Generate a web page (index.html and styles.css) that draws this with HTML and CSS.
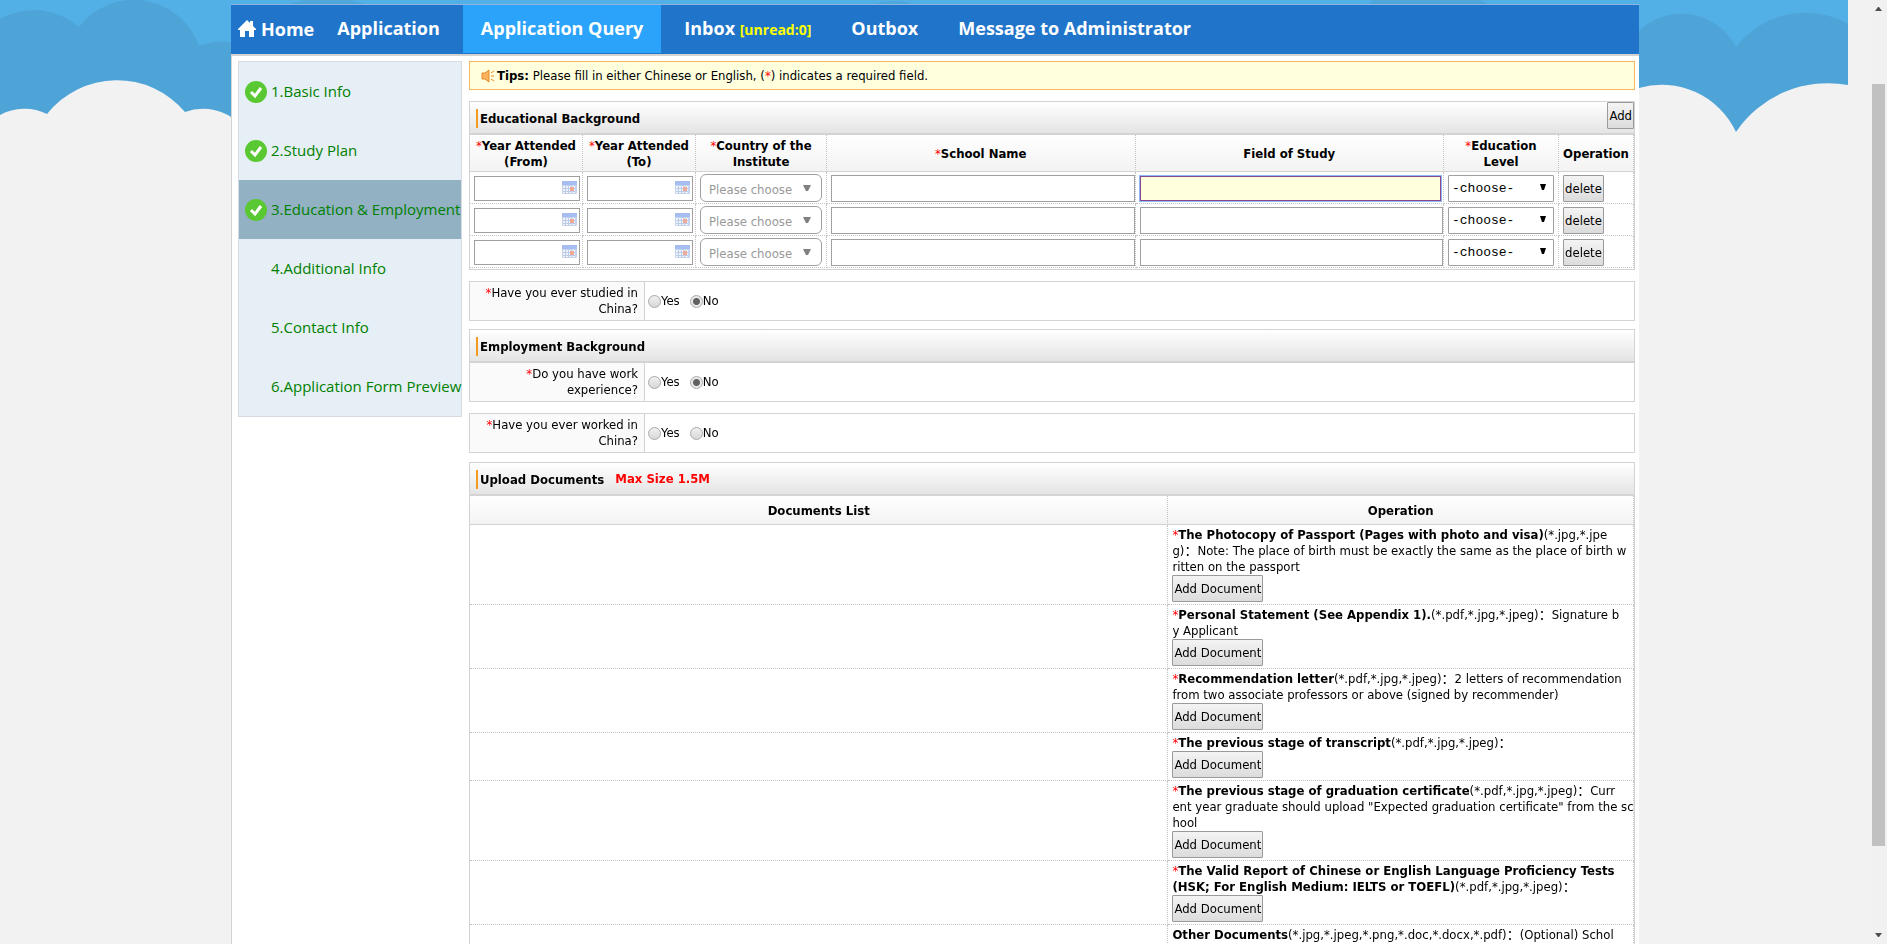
FILE: index.html
```
<!DOCTYPE html>
<html lang="en">
<head>
  <meta charset="UTF-8">
  <title>Education &amp; Employment</title>
  <link rel="stylesheet" href="styles.css">
</head>
<body>

  <div class="page">
    <svg class="sky" width="1848" height="134" viewBox="0 0 1848 134" aria-hidden="true">
      <rect width="1848" height="134" fill="#53b0e6"/>
      <path fill="#4fa4d7" d="M0 19 A68 68 0 0 1 79 27 A69 69 0 0 1 199 46 A60 60 0 0 1 260 55 V134 H0 Z"/>
      <path fill="#4fa6d9" d="M286 5 Q327 -9 368 5 Z M873 5 Q894 -3 915 5 Z M1368 5 L1373 0 H1480 L1490 5 Z"/>
      <path fill="#4fa4d7" d="M1600 60 L1639 31 A61 61 0 0 1 1736 47 A87 87 0 0 1 1848 24 V134 H1600 Z"/>
      <path fill="#f2f2f2" d="M0 115 A51 51 0 0 1 47 114 A89 89 0 0 1 185 112 A53 53 0 0 1 240 124 V134 H0 Z"/>
      <path fill="#f2f2f2" d="M1600 108 L1639 88 A82 82 0 0 1 1736 132 A111 111 0 0 1 1848 85 V134 H1600 Z"/>
    </svg>

    <div class="wrapper">
      <nav class="nav">
        <a class="home" href="#">
          <svg width="18" height="18" viewBox="0 0 18 18" aria-hidden="true"><path fill="#fff" d="M9 0 L12 3 V1 H15 V6 L18 9 V10 H16 V17 H11 V11 H7 V17 H2 V10 H0 V9 Z"/></svg>Home</a>
        <a href="#">Application</a>
        <a class="active" href="#">Application Query</a>
        <a href="#">Inbox <span class="unread">[unread:0]</span></a>
        <a href="#">Outbox</a>
        <a href="#">Message to Administrator</a>
      </nav>

      <div class="content">
        <ul class="steps">
          <li><svg class="tick" viewBox="0 0 22 22"><circle cx="11" cy="11" r="11" fill="#5ac832"/><path d="M6 11 L10 15 L16 7" fill="none" stroke="#fff" stroke-width="3"/></svg><a href="#">1.Basic Info</a></li>
          <li><svg class="tick" viewBox="0 0 22 22"><circle cx="11" cy="11" r="11" fill="#5ac832"/><path d="M6 11 L10 15 L16 7" fill="none" stroke="#fff" stroke-width="3"/></svg><a href="#">2.Study Plan</a></li>
          <li class="current"><svg class="tick" viewBox="0 0 22 22"><circle cx="11" cy="11" r="11" fill="#5ac832"/><path d="M6 11 L10 15 L16 7" fill="none" stroke="#fff" stroke-width="3"/></svg><a href="#">3.Education &amp; Employment</a></li>
          <li><a href="#">4.Additional Info</a></li>
          <li><a href="#">5.Contact Info</a></li>
          <li><a href="#">6.Application Form Preview</a></li>
        </ul>

        <main class="main">
          <div class="tips">
            <svg width="14" height="14" viewBox="0 0 14 14" aria-hidden="true">
              <path d="M1 4 H4 L8 1 V13 L4 10 H1 Z" fill="#f9b45c" stroke="#e58a2c"/>
              <path d="M10 4 L13 2 M10 7 H13 M10 10 L13 12" stroke="#e58a2c" stroke-width="1"/>
            </svg>
            <p><b>Tips:</b> Please fill in either Chinese or English, (<i>*</i>) indicates a required field.</p>
          </div>

          <section class="panel education">
            <header><h2>Educational Background</h2><button>Add</button></header>
            <table class="grid">
              <colgroup>
                <col class="c-year"><col class="c-year"><col class="c-country"><col><col><col class="c-level"><col class="c-op">
              </colgroup>
              <thead>
                <tr>
                  <th><i>*</i>Year Attended<br>(From)</th>
                  <th><i>*</i>Year Attended<br>(To)</th>
                  <th><i>*</i>Country of the<br>Institute</th>
                  <th><i>*</i>School Name</th>
                  <th>Field of Study</th>
                  <th><i>*</i>Education<br>Level</th>
                  <th>Operation</th>
                </tr>
              </thead>
              <tbody>
                <tr>
                  <td><input class="date" type="text" aria-label="Year attended from"></td>
                  <td><input class="date" type="text" aria-label="Year attended to"></td>
                  <td><select class="country" aria-label="Country of the institute"><option>Please choose</option></select></td>
                  <td class="wide"><input type="text" aria-label="School name"></td>
                  <td class="wide"><input class="focused" type="text" aria-label="Field of study" autofocus></td>
                  <td><select class="level" aria-label="Education level"><option>-choose-</option></select></td>
                  <td><button>delete</button></td>
                </tr>
                <tr>
                  <td><input class="date" type="text" aria-label="Year attended from"></td>
                  <td><input class="date" type="text" aria-label="Year attended to"></td>
                  <td><select class="country" aria-label="Country of the institute"><option>Please choose</option></select></td>
                  <td class="wide"><input type="text" aria-label="School name"></td>
                  <td class="wide"><input type="text" aria-label="Field of study"></td>
                  <td><select class="level" aria-label="Education level"><option>-choose-</option></select></td>
                  <td><button>delete</button></td>
                </tr>
                <tr>
                  <td><input class="date" type="text" aria-label="Year attended from"></td>
                  <td><input class="date" type="text" aria-label="Year attended to"></td>
                  <td><select class="country" aria-label="Country of the institute"><option>Please choose</option></select></td>
                  <td class="wide"><input type="text" aria-label="School name"></td>
                  <td class="wide"><input type="text" aria-label="Field of study"></td>
                  <td><select class="level" aria-label="Education level"><option>-choose-</option></select></td>
                  <td><button>delete</button></td>
                </tr>
              </tbody>
            </table>
          </section>

          <div class="question" role="radiogroup" aria-labelledby="q1">
            <div class="ask" id="q1"><i>*</i>Have you ever studied in<br>China?</div>
            <div class="answer">
              <label><input type="radio" name="studied">Yes</label>
              <label><input type="radio" name="studied" checked>No</label>
            </div>
          </div>

          <section class="panel employment">
            <header><h2>Employment Background</h2></header>
          </section>
          <div class="question joined" role="radiogroup" aria-labelledby="q2">
            <div class="ask" id="q2"><i>*</i>Do you have work<br>experience?</div>
            <div class="answer">
              <label><input type="radio" name="work">Yes</label>
              <label><input type="radio" name="work" checked>No</label>
            </div>
          </div>
          <div class="question" role="radiogroup" aria-labelledby="q3">
            <div class="ask" id="q3"><i>*</i>Have you ever worked in<br>China?</div>
            <div class="answer">
              <label><input type="radio" name="worked">Yes</label>
              <label><input type="radio" name="worked">No</label>
            </div>
          </div>

          <section class="panel upload">
            <header><h2>Upload Documents</h2><strong class="max">Max Size 1.5M</strong></header>
            <table class="grid docs">
              <thead>
                <tr><th class="c-list">Documents List</th><th>Operation</th></tr>
              </thead>
              <tbody>
                <tr><td></td><td><p><i>*</i><b>The Photocopy of Passport (Pages with photo and visa)</b>(*.jpg,*.jpe<br>g)：Note: The place of birth must be exactly the same as the place of birth w<br>ritten on the passport</p><button>Add Document</button></td></tr>
                <tr><td></td><td><p><i>*</i><b>Personal Statement (See Appendix 1).</b>(*.pdf,*.jpg,*.jpeg)：Signature b<br>y Applicant</p><button>Add Document</button></td></tr>
                <tr><td></td><td><p><i>*</i><b>Recommendation letter</b>(*.pdf,*.jpg,*.jpeg)：2 letters of recommendation<br>from two associate professors or above (signed by recommender)</p><button>Add Document</button></td></tr>
                <tr><td></td><td><p><i>*</i><b>The previous stage of transcript</b>(*.pdf,*.jpg,*.jpeg)：</p><button>Add Document</button></td></tr>
                <tr><td></td><td><p><i>*</i><b>The previous stage of graduation certificate</b>(*.pdf,*.jpg,*.jpeg)：Curr<br>ent year graduate should upload "Expected graduation certificate" from the sc<br>hool</p><button>Add Document</button></td></tr>
                <tr><td></td><td><p><i>*</i><b>The Valid Report of Chinese or English Language Proficiency Tests<br>(HSK; For English Medium: IELTS or TOEFL)</b>(*.pdf,*.jpg,*.jpeg)：</p><button>Add Document</button></td></tr>
                <tr><td></td><td><p><b>Other Documents</b>(*.jpg,*.jpeg,*.png,*.doc,*.docx,*.pdf)：(Optional) Schol</p></td></tr>
              </tbody>
            </table>
          </section>
        </main>
      </div>
    </div>
  </div>

  <div class="scrollbar" aria-hidden="true">
    <svg width="7" height="4" viewBox="0 0 7 4"><path fill="#505050" d="M0 4 L3 0 H4 L7 4 Z"/></svg>
    <div class="track"><div class="thumb"></div></div>
    <svg width="7" height="4" viewBox="0 0 7 4"><path fill="#505050" d="M0 0 H7 L4 4 H3 Z"/></svg>
  </div>

</body>
</html>
```
FILE: styles.css
```
* {
  box-sizing: border-box;
}
body {
  margin: 0;
  height: 100vh;
  display: flex;
  overflow: hidden;
  background: #f2f2f2;
  color: #000;
  font-family: "DejaVu Sans Condensed", "Noto Sans CJK SC", sans-serif;
  font-size: 13px;
  line-height: 16px;
}
i {
  color: #f00;
  font-style: normal;
  font-weight: normal;
}
p, h2, ul {
  margin: 0;
  padding: 0;
}
.page {
  flex: 1;
  position: relative;
  overflow: hidden;
  padding-top: 4px;
}
.sky {
  position: absolute;
  top: 0;
  left: 0;
}
.wrapper {
  position: relative;
  max-width: 1408px;
  min-height: 100%;
  margin: 0 auto;
  background: #fff;
}

/* top menu */
.nav {
  display: flex;
  gap: 6px;
  height: 52px;
  background: #2075cb;
  border-top: 1px solid #8db4e0;
  border-bottom: 2px solid #d3d3d3;
  font-family: "Open Sans", sans-serif;
  font-size: 18px;
  font-weight: bold;
}
.nav a {
  height: 48px;
  padding: 0 17px;
  line-height: 46px;
  color: #fff;
  text-decoration: none;
  white-space: nowrap;
}
.nav .home {
  display: flex;
  align-items: center;
  gap: 5px;
  padding: 0 0 0 7px;
}
.nav .active {
  padding: 0 18px;
  background: #2ba3fa;
}
.unread {
  color: #ff0;
  font-size: 14px;
}

.content {
  display: flex;
  align-items: flex-start;
  gap: 7px;
  min-height: 888px;
  padding: 5px 4px 0 6px;
  border-left: 1px solid #d3d3d3;
}

/* step list */
.steps {
  width: 224px;
  flex: none;
  list-style: none;
  background: #e6eff5;
  border: 1px solid #d5dbe0;
  font-family: "Open Sans", sans-serif;
  font-size: 15px;
}
.steps li {
  display: flex;
  align-items: center;
  justify-content: flex-end;
  height: 59px;
  padding-left: 6px;
}
.steps a {
  width: 190px;
  padding-bottom: 2px;
  color: #008000;
  text-decoration: none;
  white-space: nowrap;
}
.steps .current {
  background: #92b1c3;
}
.tick {
  width: 22px;
  height: 22px;
  margin-right: 4px;
}

.main {
  flex: 1;
  min-width: 0;
}
.tips {
  display: flex;
  align-items: center;
  gap: 2px;
  height: 29px;
  padding-left: 11px;
  background: #ffffde;
  border: 1px solid #fab75f;
}

/* panels */
.panel {
  margin-top: 11px;
  border: 1px solid #d3d3d3;
}
.panel header {
  display: flex;
  align-items: flex-start;
  height: 33px;
  background: linear-gradient(#fff, #e4e4e4);
  border-bottom: 2px solid #d3d3d3;
}
.panel h2 {
  flex: none;
  margin: 7px 0 0 6px;
  padding-left: 2px;
  border-left: 2px solid #f39a1f;
  font-size: 13px;
  line-height: 19px;
}
.panel header button {
  margin-left: auto;
}
.education {
  padding-bottom: 1px;
}
.employment {
  margin-top: 8px;
  border-bottom: 0;
}
.upload {
  margin-top: 9px;
}
.max {
  margin: 8px 0 0 11px;
  color: #f00;
}

button {
  height: 27px;
  padding: 0 1px;
  background: linear-gradient(#f4f4f4, #dcdcdc);
  border: 1px solid #9a9a9a;
  border-radius: 1px;
  font-family: inherit;
  font-size: 13px;
  color: #000;
}

.grid {
  width: 100%;
  table-layout: fixed;
  border-collapse: separate;
  border-spacing: 0;
}
.grid th {
  height: 37px;
  padding: 1px 0 0;
  background: linear-gradient(#fff, #f3f3f3);
  border-right: 1px dotted #c4c4c4;
  border-bottom: 1px solid #d3d3d3;
  line-height: 16px;
  white-space: nowrap;
}
.grid td {
  height: 32px;
  padding: 2px 4px 1px;
  border-right: 1px dotted #c4c4c4;
  border-bottom: 1px dotted #c4c4c4;
}
.grid .wide {
  padding-right: 0;
}
.c-year {
  width: 113px;
}
.c-country {
  width: 131px;
}
.c-level {
  width: 115px;
}
.c-op {
  width: 75px;
}
.grid input, .grid select {
  display: block;
  width: 100%;
  height: 27px;
  margin: 0;
  padding: 0 2px;
  background-color: #fff;
  border: 1px solid #a0a0a0;
}
.grid .date {
  width: 106px;
  height: 25px;
  background: #fff url("data:image/svg+xml,%3Csvg xmlns='http://www.w3.org/2000/svg' width='16' height='16'%3E%3Crect x='1' y='2' width='15' height='13' rx='1' fill='%23c6d3ec'/%3E%3Cpath d='M2 7h12v7H2z' fill='%23eef3fb'/%3E%3Cpath d='M1 2h15v4H1z' fill='%23a5bdf0'/%3E%3Cpath d='M2 9.5h12M2 12.5h12M4.500 7v7M7.500 7v7M10.500 7v7' stroke='%23bccbe8'/%3E%3Cpath d='M9 8h4v4H9z' fill='%23f0a994'/%3E%3C/svg%3E") no-repeat right 2px top 2px;
}
.grid .focused {
  width: calc(100% - 2px);
  height: 25px;
  background: #ffffde;
  border-color: #8a4a8a;
  outline: 1px solid #8ab8f8;
}
.grid select {
  appearance: none;
  background-repeat: no-repeat;
  background-position: right 7px top 8px;
  background-image: url("data:image/svg+xml,%3Csvg xmlns='http://www.w3.org/2000/svg' width='6' height='7'%3E%3Cpath d='M0 0h6L4 6H2z'/%3E%3C/svg%3E");
  color: #000;
}
.grid .country {
  height: 28px;
  padding: 2px 8px 0;
  border-radius: 6px;
  color: #999;
  font-family: "DejaVu Sans Condensed", sans-serif;
  font-size: 13px;
  background-position: right 10px top 10px;
  background-image: url("data:image/svg+xml,%3Csvg xmlns='http://www.w3.org/2000/svg' width='8' height='7'%3E%3Cpath d='M0 0h8L5 6H3z' fill='%23808080'/%3E%3C/svg%3E");
}
.grid .level {
  width: 106px;
  padding-left: 3px;
  border-radius: 1px;
  font-family: "Liberation Mono", monospace;
  font-size: 13px;
}

.docs .c-list {
  width: 60%;
}
.grid.docs th {
  height: 29px;
}
.docs td {
  padding: 2px 4px;
  vertical-align: top;
}
.docs p {
  white-space: nowrap;
}
.docs button {
  display: block;
}

/* yes / no questions */
.question {
  display: flex;
  height: 40px;
  margin-top: 11px;
  border: 1px solid #d3d3d3;
}
.question.joined {
  height: 39px;
  margin-top: 0;
  border-top: 0;
}
.ask {
  width: 175px;
  padding: 3px 6px 0 0;
  background: #fafafa;
  border-right: 1px solid #d3d3d3;
  text-align: right;
}
.answer {
  display: flex;
  align-items: center;
  gap: 10px;
  padding-left: 3px;
}
.answer label {
  display: flex;
  align-items: center;
}
.answer input {
  appearance: none;
  width: 13px;
  height: 13px;
  margin: 1px 0 0;
  background: linear-gradient(#f0f0f0, #d8d8d8);
  border: 1px solid #a8a8a8;
  border-radius: 50%;
}
.answer input:checked {
  background: radial-gradient(#606060 3px, #e8e8e8 4px);
}

/* window scrollbar */
.scrollbar {
  display: flex;
  flex-direction: column;
  align-items: center;
  justify-content: space-between;
  width: 17px;
  padding: 7px 0;
  background: #f1f1f1;
}
.track {
  flex: 1;
  margin: 6px 0;
  padding-top: 67px;
}
.thumb {
  width: 13px;
  height: calc((100vh - 34px) * 0.837);
  background: #c1c1c1;
}
```
